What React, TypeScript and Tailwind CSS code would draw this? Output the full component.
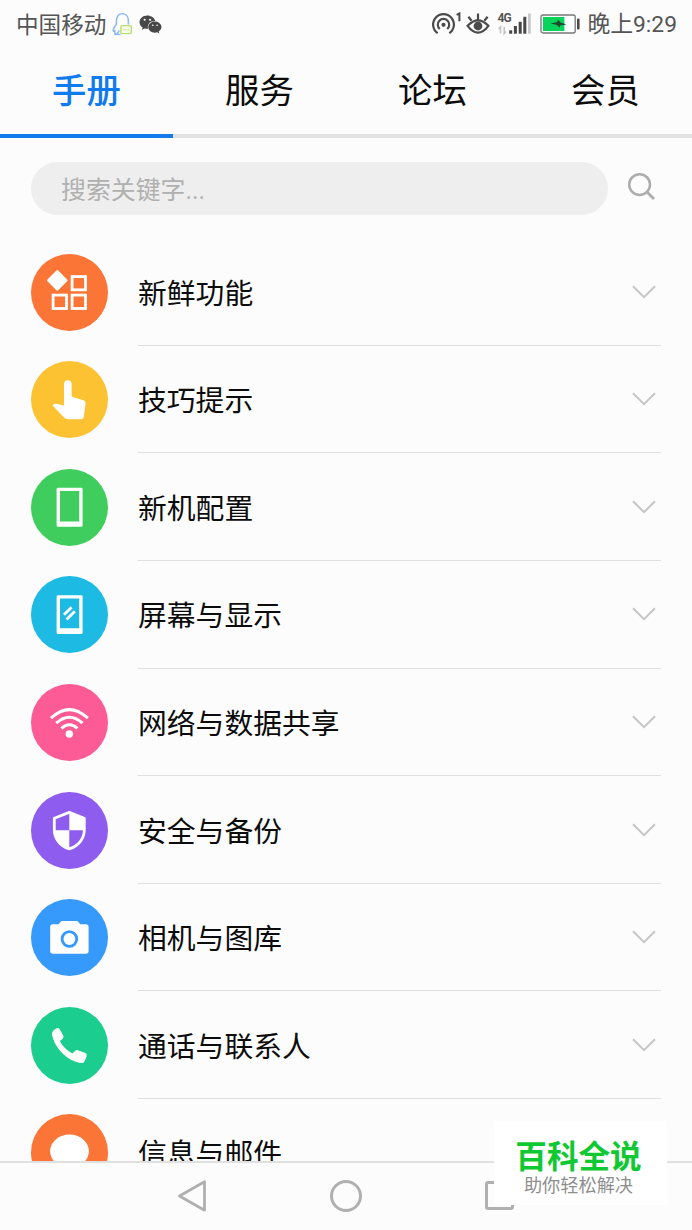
import { useState } from "react";
import type { ReactNode } from "react";
import { FaWeixin } from "react-icons/fa";

const tabs = ["手册", "服务", "论坛", "会员"];

type Section = {
  title: string;
  color: string;
  icon: ReactNode;
};

// All section icons are drawn on a 77x77 canvas, the size of the round badge
const sections: Section[] = [
  {
    title: "新鲜功能",
    color: "bg-[#fb7537]",
    icon: (
      <>
        <path
          d="M26.3 17.5 35.2 26.4 26.3 35.3 17.4 26.4Z"
          fill="#fff"
          stroke="#fff"
          strokeWidth="2.6"
          strokeLinejoin="round"
        />
        <g fill="none" stroke="#fff" strokeWidth="2.8">
          <rect x="41.1" y="22.6" width="13.4" height="13.2" />
          <rect x="22.1" y="41.1" width="13.4" height="13.4" />
          <rect x="41.1" y="41.1" width="13.4" height="13.4" />
        </g>
      </>
    ),
  },
  {
    title: "技巧提示",
    color: "bg-[#fdc232]",
    icon: (
      <path
        d="M33 44.6V23a3.8 3.8 0 0 1 7.6 0V34.6Q41 36 43 36.4L52.6 39.2Q54.8 40 54.6 42.4L52.8 56Q52.4 58.2 50.2 58.2H36.8Q34.8 58.2 33.2 56.8L21.4 44.2Q22.8 42.2 25.4 42.8Z"
        fill="#fff"
      />
    ),
  },
  {
    title: "新机配置",
    color: "bg-[#3fce5d]",
    icon: (
      <path
        d="M27 18.8H50.2Q51.6 18.8 51.6 20.2V56.2Q51.6 57.7 50.2 57.7H27Q25.6 57.7 25.6 56.2V20.2Q25.6 18.8 27 18.8ZM29 22V52.4H48.2V22Z"
        fill="#fff"
        fillRule="evenodd"
      />
    ),
  },
  {
    title: "屏幕与显示",
    color: "bg-[#1dbae4]",
    icon: (
      <>
        <path
          d="M27 19.2H50.2Q51.6 19.2 51.6 20.6V56.6Q51.6 58.1 50.2 58.1H27Q25.6 58.1 25.6 56.6V20.6Q25.6 19.2 27 19.2ZM29 22.4V52.2H48.2V22.4Z"
          fill="#fff"
          fillRule="evenodd"
        />
        <path
          d="M33 38.8 40.6 31.2M35.6 43.4 43.8 35.2"
          stroke="#fff"
          strokeWidth="2.8"
        />
      </>
    ),
  },
  {
    title: "网络与数据共享",
    color: "bg-[#fd5b96]",
    icon: (
      <>
        <g fill="none" stroke="#fff" strokeWidth="3">
          <path d="M20 34.2Q38.4 17 56.8 34.2" />
          <path d="M25.2 39.2Q38.4 27.2 51.6 39.2" />
          <path d="M30.4 44.4Q38.4 37.2 46.4 44.4" />
        </g>
        <circle cx="38.3" cy="50" r="3.7" fill="#fff" />
      </>
    ),
  },
  {
    title: "安全与备份",
    color: "bg-[#8e5cee]",
    icon: (
      <>
        <path
          d="M38.3 20.4 53.3 26.2V38C53.3 46 48 54 38.3 56.8 28.6 54 23.3 46 23.3 38V26.2Z"
          fill="none"
          stroke="#fff"
          strokeWidth="2.8"
          strokeLinejoin="round"
        />
        <path
          d="M38.3 20.4 53.3 26.2V38.2H38.3ZM38.3 38.2V56.8C28.6 54 23.3 46 23.3 38.2Z"
          fill="#fff"
        />
      </>
    ),
  },
  {
    title: "相机与图库",
    color: "bg-[#3699fc]",
    icon: (
      <>
        <path
          d="M22 25.2H27.6L29.6 22.8Q30.4 22 31.6 22H45.2Q46.4 22 47.2 22.8L49.2 25.2H54.8Q57.6 25.2 57.6 28V52Q57.6 54.8 54.8 54.8H22Q19.2 54.8 19.2 52V28Q19.2 25.2 22 25.2Z"
          fill="#fff"
        />
        <circle cx="38.4" cy="40" r="7.3" fill="none" stroke="#3699fc" strokeWidth="2.8" />
      </>
    ),
  },
  {
    title: "通话与联系人",
    color: "bg-[#1ccd90]",
    icon: (
      <path
        d="M25.2 21.4Q27.6 20.4 28.8 22.4L32.2 28.6Q33.2 30.6 31.4 32L28.8 34C31.4 39 35.8 43.6 41.4 46.6L44 44Q45.2 42.8 46.8 43.2L54.4 46Q56.2 47 55.6 49.2L53.6 54.2Q52.4 56.4 49.8 56C36.2 53.8 23.8 41 21.2 28.4Q20.6 25.6 22.4 23.6Q23.6 22.2 25.2 21.4Z"
        fill="#fff"
      />
    ),
  },
  {
    title: "信息与邮件",
    color: "bg-[#fb7537]",
    icon: <ellipse cx="38.5" cy="37.2" rx="19.4" ry="16.6" fill="#fff" />,
  },
];

function StatusBar() {
  return (
    <div className="flex h-12 shrink-0 items-center pl-4 pr-[15px] text-[22.6px] leading-none text-[#555]">
      <span className="whitespace-nowrap">中国移动</span>
      <svg className="ml-[6px] h-6 w-[22px]" viewBox="0 0 22 24" fill="none">
        <path
          d="M7.4 18.6C5.6 21.4 4 22.6 3 22.4L2.8 18.6C.4 20.6.6 16.4 4.4 12.2V8.5C4.4 4 7 1.8 10.3 1.8S16.4 4 16.4 8.5V12.6"
          stroke="#8fbbf5"
          strokeWidth="1.6"
          strokeLinejoin="round"
        />
        <path d="M3 22.4H8.6" stroke="#8fbbf5" strokeWidth="1.5" />
        <rect x="8.9" y="13.6" width="10.4" height="8" rx="1" fill="#f8fbe9" stroke="#b9df6e" strokeWidth="1.4" />
        <path d="M11.2 17.6H17.2" stroke="#c9e68c" strokeWidth="1.4" strokeDasharray="1.4 .8" />
      </svg>
      <FaWeixin className="ml-[5px] size-[23px] text-[#484848]" />

      <div className="ml-auto flex items-center">
        <svg className="h-6 w-8" viewBox="0 0 32 24" fill="none" stroke="#4b4b4b">
          <circle cx="12.5" cy="12.8" r="2.1" fill="#4b4b4b" stroke="none" />
          <path d="M8.8 17A5.7 5.7 0 1 1 16.2 17" strokeWidth="2.2" />
          <path d="M6.7 21.2A10.4 10.4 0 1 1 18.3 21.2" strokeWidth="2.2" />
          <path d="M25.6 2.8 28.4 1.4V9.2" strokeWidth="2" />
        </svg>
        <svg className="ml-[3px] h-6 w-6" viewBox="0 0 24 24" fill="none" stroke="#4b4b4b">
          <path d="M1.6 13.8Q12 2.8 22.4 13.8 12 27.4 1.6 13.8Z" strokeWidth="2.2" />
          <circle cx="12" cy="14" r="4.4" fill="#4b4b4b" stroke="none" />
          <path d="M12 8V1.6M5.6 8.8 2.4 4.8M18.4 8.8 21.6 4.8" strokeWidth="2.2" />
        </svg>
        <div className="relative ml-[7px] h-6 w-9">
          <span className="absolute left-0 top-0 font-['Roboto',sans-serif] text-[12px] font-bold leading-[12px] tracking-[-0.8px]">
            4G
          </span>
          <svg className="h-6 w-9" viewBox="0 0 36 24">
            <path
              d="M3.5 21.6V14.8L1.6 17M7.2 14.8V21.6L9.1 19.4"
              fill="none"
              stroke="#c4c4c4"
              strokeWidth="1.6"
            />
            <g fill="#474747">
              <rect x="12.2" y="18.3" width="3" height="3.4" />
              <rect x="16.9" y="14" width="3" height="7.7" />
              <rect x="21.7" y="9.8" width="3" height="11.9" />
              <rect x="26.3" y="4.8" width="3" height="16.9" />
            </g>
            <rect x="31" y="1.5" width="2.8" height="20.2" fill="#c8c8c8" />
          </svg>
        </div>
        <svg className="ml-[7px] h-6 w-10" viewBox="0 0 40 24">
          <rect x="1" y="3" width="34.2" height="18" rx="2" fill="#fff" stroke="#777" strokeWidth="1.3" />
          <rect x="3" y="5" width="21.4" height="14" fill="#08d35b" />
          <path d="M10.5 11.5 17.5 10V7.2L20.5 10.4 26.5 12.4 20 13.4V15.8L16.5 12.8Z" fill="#1c4a2a" />
          <rect x="37" y="6.5" width="2.6" height="11" rx="1" fill="#4b4b4b" />
        </svg>
        <span className="ml-[7px] whitespace-nowrap pt-[3px] font-['Roboto','Noto_Sans_CJK_SC',sans-serif] text-[22.8px]">
          晚上9:29
        </span>
      </div>
    </div>
  );
}

function SearchRow() {
  return (
    <div className="mt-6 flex h-[53px] shrink-0 items-center pl-[31px] pr-[36px]">
      <div className="flex h-full w-[577px] items-center rounded-full bg-[#eee] pl-[30px] pt-[5px] font-['Roboto','Noto_Sans_CJK_SC',sans-serif] text-[24.9px] leading-none text-[#b0b0b0]">
        搜索关键字...
      </div>
      <svg
        className="mb-1.5 ml-auto size-[29px]"
        viewBox="0 0 29 29"
        fill="none"
        stroke="#adadad"
        strokeWidth="2.5"
      >
        <circle cx="12.6" cy="13.6" r="10.4" />
        <path d="M20 21 27 28" strokeWidth="2.8" />
      </svg>
    </div>
  );
}

function SectionRow({ title, color, icon }: Section) {
  return (
    <li className="flex h-[107.6px] shrink-0 pl-[31px] pr-[31px]">
      <div className="flex items-center">
        <div className={`size-[77px] rounded-full ${color}`}>
          <svg className="size-full" viewBox="0 0 77 77">
            {icon}
          </svg>
        </div>
      </div>
      <div className="ml-[30px] flex flex-1 items-center justify-between border-b border-[#e0e0e0]">
        <span className="pt-px text-[28.8px] leading-none text-[#0c0c0c]">{title}</span>
        <svg className="mr-[5px] h-[14px] w-6" viewBox="0 0 24 14" fill="none">
          <path d="M1 1.2 12 12.2 23 1.2" stroke="#c6c6c6" strokeWidth="2" />
        </svg>
      </div>
    </li>
  );
}

function NavBar() {
  return (
    <div className="flex h-[69px] shrink-0 items-center border-t-2 border-[#e0e0e0] bg-[#fcfcfc] pb-[2px]">
      <svg className="ml-[176px] h-[34px] w-8" viewBox="0 0 32 34" fill="none">
        <path
          d="M3.5 17 28.5 2.8V31.2Z"
          stroke="#b0b0b0"
          strokeWidth="2.8"
          strokeLinejoin="round"
        />
      </svg>
      <div className="ml-[122px] size-8 rounded-full border-3 border-[#b0b0b0]" />
      <div className="ml-[123px] size-[29px] rounded-[3px] border-3 border-[#b0b0b0]" />
    </div>
  );
}

export default function App() {
  const [activeTab, setActiveTab] = useState(0);

  return (
    <div className="relative flex h-[1230px] w-[692px] flex-col overflow-hidden bg-[#fcfcfc] font-['Noto_Sans_CJK_SC',sans-serif]">
      <StatusBar />

      <div className="grid h-[90px] shrink-0 grid-cols-4">
        {tabs.map((tab, i) => (
          <button
            key={tab}
            onClick={() => setActiveTab(i)}
            className={`border-b-4 pb-1.5 text-[34.4px] leading-none ${
              i === activeTab
                ? "border-[#147be9] font-medium text-[#0f7bee]"
                : "border-[#e1e1e1] text-[#0c0c0c]"
            }`}
          >
            {tab}
          </button>
        ))}
      </div>

      <SearchRow />

      <ul className="mt-[23.3px] flex min-h-0 flex-1 flex-col overflow-hidden">
        {sections.map((section) => (
          <SectionRow key={section.title} {...section} />
        ))}
      </ul>

      <NavBar />

      <div className="absolute left-[494px] top-[1121px] flex h-[84px] w-[173px] flex-col items-center bg-white pr-[4px]">
        <span className="mt-[17px] text-[31.6px] font-bold leading-8 text-[#10c832]">百科全说</span>
        <span className="mt-1 text-[18.2px] leading-5 text-[#8e8e8e]">助你轻松解决</span>
      </div>
    </div>
  );
}
